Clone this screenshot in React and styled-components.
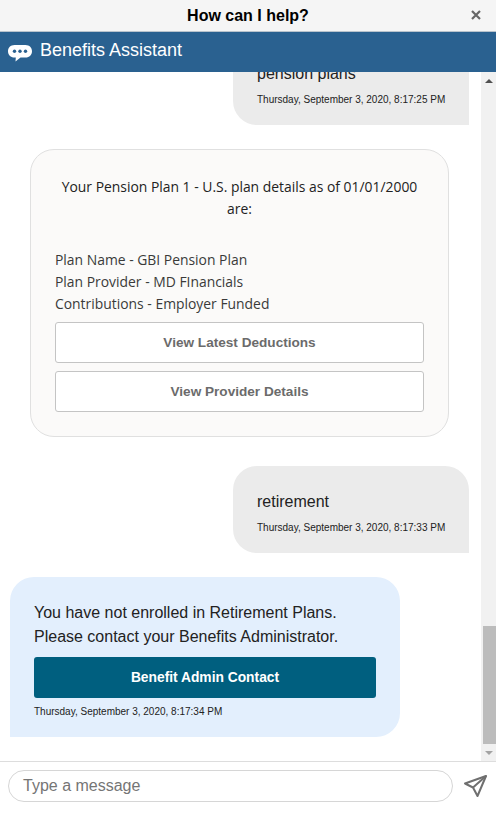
import React from "react";
import styled, { createGlobalStyle } from "styled-components";

const Global = createGlobalStyle`
  html, body { margin: 0; padding: 0; height: 100%; background: #fff; }
  #root { height: 822px; }
  * { box-sizing: border-box; }
  body { font-family: "Liberation Sans", Arial, sans-serif; color: #222; }
`;

const Page = styled.div`
  width: 496px; height: 822px; display: flex; flex-direction: column; overflow: hidden; background: #fff;
`;
const TopBar = styled.div`
  height: 32px; flex: none; background: #f5f5f5; border-bottom: 1px solid #b9c3cc;
  display: flex; align-items: center; justify-content: center; position: relative;
`;
const TopTitle = styled.div`
  font-size: 16px; font-weight: 700; color: #000; line-height: 31px;
`;
const CloseBtn = styled.svg`
  position: absolute; right: 15px; top: 10px; width: 10px; height: 10px;
`;
const Header = styled.div`
  height: 40px; flex: none; background: #2a6190; display: flex; align-items: center; padding: 0 0 4px 8px; gap: 8px;
  color: #fff; font-size: 18px;
`;
const ChatIcon = styled.svg`
  width: 24px; height: 17px; flex: none; margin-top: 6px;
`;
const Middle = styled.div`
  height: 690px; flex: none; display: flex; border-bottom: 1px solid #ddd;
`;
const Messages = styled.div`
  flex: 1; min-width: 0; overflow: hidden; display: flex; flex-direction: column; justify-content: flex-end; padding-bottom: 24px;
`;
const UserBubble = styled.div`
  flex: none; align-self: flex-end; width: 236px; margin-right: 12px; background: #ebebeb;
  border-radius: 24px 24px 0 24px; padding: 24px 24px 19px;
`;
const UserText = styled.div`
  font-size: 16px; line-height: 24px; color: #222; margin-bottom: 8px;
`;
const Stamp = styled.div`
  font-size: 10px; line-height: 12px; color: #222; white-space: nowrap;
`;
const Card = styled.div`
  flex: none; width: 419px; margin: 24px 0 29px 30px; background: #fbfaf9; border: 1px solid #e0e0e0; border-radius: 24px;
  padding: 26px 24px 24px; font-family: "Open Sans", sans-serif; font-size: 13.9px; line-height: 22px; color: #333;
`;
const CardHead = styled.div`
  text-align: center; color: #222; margin-bottom: 29px;
`;
const CardLines = styled.div`
  color: #3a3a3a; margin-bottom: 7px;
`;
const OutlineBtn = styled.div`
  height: 41px; background: #fff; border: 1px solid #c4c4c4; border-radius: 3px;
  display: flex; align-items: center; justify-content: center;
  font-family: "Liberation Sans", sans-serif; font-weight: 700; font-size: 13.6px; color: #6b6b6b;
  & + & { margin-top: 8px; }
`;
const BotBubble = styled.div`
  flex: none; width: 390px; margin: 24px 0 0 10px; background: #e3effd; border-radius: 24px 24px 24px 0; padding: 24px 24px 19px;
`;
const BotText = styled.div`
  font-size: 16px; line-height: 24px; color: #222;
`;
const SolidBtn = styled.div`
  height: 41px; margin: 8px 0 8px; background: #005f7f; border-radius: 3px; display: flex; align-items: center; justify-content: center;
  color: #fff; font-weight: 700; font-size: 13.8px;
`;
const Scrollbar = styled.div`
  width: 15px; flex: none; background: #f1f1f1; display: flex; flex-direction: column; align-items: stretch;
`;
const ArrowCell = styled.div`
  height: 17px; flex: none; display: flex; align-items: center; justify-content: center;
`;
const Arrow = styled.div`
  width: 0; height: 0; border-left: 4px solid transparent; border-right: 4px solid transparent;
  ${p => p.$down ? "border-top: 4px solid #a3a3a3;" : "border-bottom: 4px solid #505050;"}
`;
const Track = styled.div`
  flex: 1; display: flex; flex-direction: column; justify-content: flex-end; padding-left: 2px;
`;
const Thumb = styled.div`
  height: 118px; background: #bcbcbc;
`;
const Composer = styled.div`
  flex: 1; display: flex; align-items: flex-start; padding: 8px 9px 0 8px; gap: 11px;
`;
const InputBox = styled.div`
  width: 446px; height: 32px; border: 1px solid #d6d6d6; border-radius: 16px; display: flex; align-items: center; padding-left: 14px;
  font-size: 16px; color: #757575; background: #fff;
`;
const SendIcon = styled.svg`
  width: 23px; height: 23px; flex: none; margin-top: 5px;
`;

export default function App() {
  return (
    <Page>
      <Global />
      <TopBar>
        <TopTitle>How can I help?</TopTitle>
        <CloseBtn viewBox="0 0 10 10"><path d="M1 1l8 8M9 1l-8 8" stroke="#666" strokeWidth="2.200" fill="none" /></CloseBtn>
      </TopBar>
      <Header>
        <ChatIcon viewBox="0 0 24 17">
          <path d="M6.500 0h11C21.500 0 24 2.800 24 6.200S21.500 12.500 17.500 12.500H12.500L7.500 16.500 7.800 12.500H6.500C2.500 12.500 0 9.600 0 6.200S2.500 0 6.500 0z" fill="#fff" />
          <circle cx="6.500" cy="6.300" r="1.700" fill="#2a6190" />
          <circle cx="12" cy="6.300" r="1.700" fill="#2a6190" />
          <circle cx="17.500" cy="6.300" r="1.700" fill="#2a6190" />
        </ChatIcon>
        Benefits Assistant
      </Header>
      <Middle>
        <Messages>
          <UserBubble>
            <UserText>pension plans</UserText>
            <Stamp>Thursday, September 3, 2020, 8:17:25 PM</Stamp>
          </UserBubble>
          <Card>
            <CardHead>Your Pension Plan 1 - U.S. plan details as of 01/01/2000 are:</CardHead>
            <CardLines>
              <div>Plan Name - GBI Pension Plan</div>
              <div>Plan Provider - MD FInancials</div>
              <div>Contributions - Employer Funded</div>
            </CardLines>
            <OutlineBtn>View Latest Deductions</OutlineBtn>
            <OutlineBtn>View Provider Details</OutlineBtn>
          </Card>
          <UserBubble>
            <UserText>retirement</UserText>
            <Stamp>Thursday, September 3, 2020, 8:17:33 PM</Stamp>
          </UserBubble>
          <BotBubble>
            <BotText>You have not enrolled in Retirement Plans.<br />Please contact your Benefits Administrator.</BotText>
            <SolidBtn>Benefit Admin Contact</SolidBtn>
            <Stamp>Thursday, September 3, 2020, 8:17:34 PM</Stamp>
          </BotBubble>
        </Messages>
        <Scrollbar>
          <ArrowCell><Arrow /></ArrowCell>
          <Track><Thumb /></Track>
          <ArrowCell><Arrow $down /></ArrowCell>
        </Scrollbar>
      </Middle>
      <Composer>
        <InputBox>Type a message</InputBox>
        <SendIcon viewBox="0 0 23 23">
          <path d="M22 1L1 8.500l8 4 4.500 8.500z" fill="none" stroke="#6f6f6f" strokeWidth="2" strokeLinejoin="round" />
          <path d="M22 1L9 12.500" fill="none" stroke="#6f6f6f" strokeWidth="2" />
        </SendIcon>
      </Composer>
    </Page>
  );
}
